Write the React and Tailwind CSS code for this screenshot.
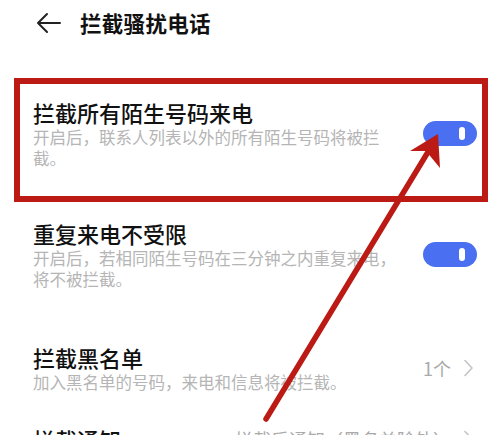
import React from "react";

const font = { fontFamily: '"Noto Sans CJK SC", "Noto Sans", sans-serif' };

function Toggle() {
  return (
    <div className="relative h-[25px] w-[54px] shrink-0 rounded-full bg-[#4a6ff0]">
      <div className="absolute right-[12px] top-[6px] h-[13px] w-[6px] rounded-full bg-white" />
    </div>
  );
}

function Chevron() {
  return (
    <svg width="11" height="18" viewBox="0 0 11 18" className="ml-[12px]">
      <path d="M2 1.5 L9 9 L2 16.5" fill="none" stroke="#c4c4c4" strokeWidth="1.6" strokeLinecap="round" strokeLinejoin="round" />
    </svg>
  );
}

export default function App() {
  return (
    <div className="relative h-[435px] w-[502px] overflow-hidden bg-white text-[#111]" style={font}>
      {/* Header */}
      <div className="flex h-[45px] items-center pl-[36px]">
        <svg width="26" height="22" viewBox="0 0 26 22">
          <path d="M2 11 H24 M11 2 L2 11 L11 20" fill="none" stroke="#222" strokeWidth="2" strokeLinecap="round" strokeLinejoin="round" />
        </svg>
        <div className="ml-[18px] text-[21.5px] font-bold leading-[30px] tracking-[0.3px]">拦截骚扰电话</div>
      </div>

      <div className="px-[33px] pr-[25px]">
        {/* Row 1 */}
        <div className="mt-[52px] flex items-center">
          <div className="flex-1">
            <div className="text-[22px] font-medium leading-[30px]">拦截所有陌生号码来电</div>
            <div className="w-[360px] text-[16.5px] leading-[21px] text-[#b5b5b5]">开启后，联系人列表以外的所有陌生号码将被拦截。</div>
          </div>
          <Toggle />
        </div>

        {/* Row 2 */}
        <div className="mt-[49px] flex items-center">
          <div className="flex-1">
            <div className="text-[22px] font-medium leading-[30px]">重复来电不受限</div>
            <div className="w-[370px] text-[16.5px] leading-[21px] text-[#b5b5b5]">开启后，若相同陌生号码在三分钟之内重复来电，将不被拦截。</div>
          </div>
          <Toggle />
        </div>

        {/* Row 3 */}
        <div className="mt-[52px] flex items-center">
          <div className="flex-1">
            <div className="text-[22px] font-medium leading-[30px]">拦截黑名单</div>
            <div className="text-[16.5px] leading-[21px] text-[#b5b5b5]">加入黑名单的号码，来电和信息将被拦截。</div>
          </div>
          <div className="flex items-center pr-[3px]">
            <span className="text-[18px] leading-[24px] text-[#aaaaaa]">1个</span>
            <Chevron />
          </div>
        </div>

        {/* Row 4 */}
        <div className="mt-[31px] flex items-center">
          <div className="flex-1 text-[22px] font-medium leading-[30px]">拦截通知</div>
          <div className="flex items-center pr-[3px]">
            <span className="text-[18px] leading-[24px] text-[#aaaaaa]">拦截后通知（黑名单除外）</span>
            <Chevron />
          </div>
        </div>
      </div>

      {/* Red highlight box */}
      <div className="pointer-events-none absolute left-[14px] top-[78px] h-[124px] w-[474px] border-[6px] border-[#bb1b14]" />

      {/* Red arrow */}
      <svg className="pointer-events-none absolute left-0 top-0" width="502" height="435" viewBox="0 0 502 435">
        <line x1="266" y1="419" x2="428" y2="152" stroke="#bb1b14" strokeWidth="5.5" strokeLinecap="round" />
        <polygon points="438,134 410,151 426,151 440,168" fill="#bb1b14" />
      </svg>
    </div>
  );
}
